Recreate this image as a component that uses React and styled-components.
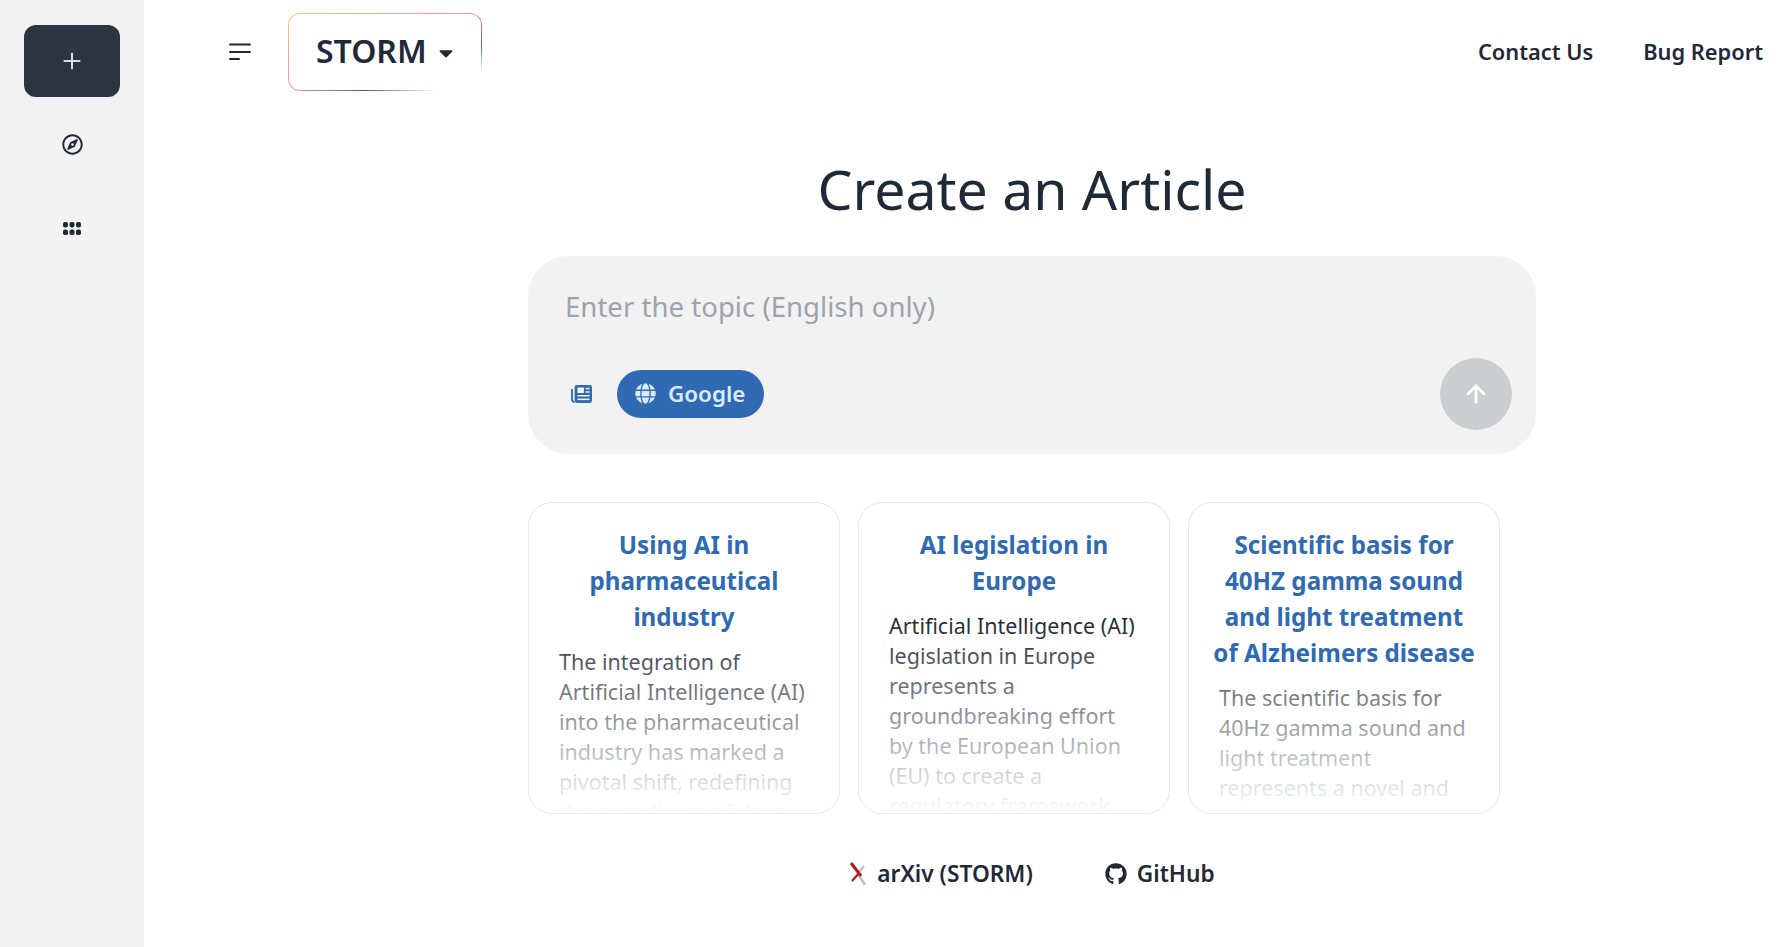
import React from "react"
import styled, { createGlobalStyle } from "styled-components"
import { FaCaretDown, FaGithub, FaGlobe, FaRegCompass } from "react-icons/fa"
import { ArrowUp, Plus } from "lucide-react"

const GlobalStyle = createGlobalStyle`
  html, body {
    margin: 0;
    padding: 0;
    background: #fff;
    font-family: "Noto Sans", "Open Sans", sans-serif;
    color: #1f2937;
  }
  * {
    box-sizing: border-box;
  }
`

const topics = [
  {
    title: "Using AI in pharmaceutical industry",
    titleLines: ["Using AI in", "pharmaceutical", "industry"],
    lines: [
      "The integration of",
      "Artificial Intelligence (AI)",
      "into the pharmaceutical",
      "industry has marked a",
      "pivotal shift, redefining",
      "the paradigms of drug",
    ],
  },
  {
    title: "AI legislation in Europe",
    titleLines: ["AI legislation in", "Europe"],
    lines: [
      "Artificial Intelligence (AI)",
      "legislation in Europe",
      "represents a",
      "groundbreaking effort",
      "by the European Union",
      "(EU) to create a",
      "regulatory framework",
    ],
  },
  {
    title: "Scientific basis for 40HZ",
    titleLines: ["Scientific basis for", "40HZ gamma sound", "and light treatment", "of Alzheimers disease"],
    lines: [
      "The scientific basis for",
      "40Hz gamma sound and",
      "light treatment",
      "represents a novel and",
    ],
  },
]

const GridDots = () => (
  <svg width="18" height="13" viewBox="0 0 18 13" fill="#1f2937">
    <rect x="0" y="0" width="5" height="5.4" rx="1.8" />
    <rect x="6.5" y="0" width="5" height="5.4" rx="1.8" />
    <rect x="13" y="0" width="5" height="5.4" rx="1.8" />
    <rect x="0" y="7.6" width="5" height="5.4" rx="1.8" />
    <rect x="6.5" y="7.6" width="5" height="5.4" rx="1.8" />
    <rect x="13" y="7.6" width="5" height="5.4" rx="1.8" />
  </svg>
)

const NewspaperGlyph = () => (
  <svg width="21" height="18" viewBox="0 0 21 18">
    <path d="M1 4v10.5A2.5 2.5 0 0 0 3.5 17" fill="none" stroke="#2f6ab3" strokeWidth="1.8" />
    <rect x="3.6" y="0" width="17.4" height="18" rx="2.4" fill="#2f6ab3" />
    <g fill="#f2f2f2">
      <rect x="6.5" y="2.6" width="6.4" height="5.4" rx="0.6" />
      <rect x="14.6" y="2.8" width="4" height="1.5" />
      <rect x="14.6" y="6.2" width="4" height="1.5" />
      <rect x="6.5" y="10" width="12.1" height="1.5" />
      <rect x="6.5" y="13.6" width="12.1" height="1.5" />
    </g>
  </svg>
)

const ArxivMark = () => (
  <svg width="18" height="24" viewBox="0 0 18 24">
    <path d="M15 4 10 10" stroke="#bdbdbd" strokeWidth="2.2" />
    <path d="M9 12 16 23" stroke="#c4c4c4" strokeWidth="3" />
    <path d="M10.5 10.5 3 19" stroke="#b31b1b" strokeWidth="2.2" />
    <path d="M2 1 12 14" stroke="#b31b1b" strokeWidth="3" />
  </svg>
)

export default function App() {
  return (
    <>
      <GlobalStyle />
      <Page>
        <Sidebar>
          <NewButton aria-label="New">
            <Plus size={26} strokeWidth={1.85} />
          </NewButton>
          <RailIcon>
            <FaRegCompass size={21} />
          </RailIcon>
          <RailIcon>
            <GridDots />
          </RailIcon>
        </Sidebar>

        <Main>
          <Header>
            <HeaderLeft>
              <MenuIcon width="24" height="20" viewBox="0 0 24 20">
                <path d="M2 2.5h20M2 10h20M2 17h9" stroke="#1f2937" strokeWidth="2" strokeLinecap="round" />
              </MenuIcon>
              <ModelPicker>
                STORM
                <FaCaretDown size={22} />
              </ModelPicker>
            </HeaderLeft>
            <HeaderLinks>
              <HeaderLink>Contact Us</HeaderLink>
              <HeaderLink>Bug Report</HeaderLink>
            </HeaderLinks>
          </Header>

          <Content>
            <Heading>Create an Article</Heading>

            <Composer>
              <Placeholder>Enter the topic (English only)</Placeholder>
              <ComposerBar>
                <ComposerTools>
                  <NewsIcon>
                    <NewspaperGlyph />
                  </NewsIcon>
                  <SourcePill>
                    <FaGlobe size={21} />
                    Google
                  </SourcePill>
                </ComposerTools>
                <SendButton aria-label="Send">
                  <ArrowUp size={28} strokeWidth={2.2} />
                </SendButton>
              </ComposerBar>
            </Composer>

            <Cards>
              {topics.map(topic => (
                <Card key={topic.title}>
                  <CardTitle>
                    {topic.titleLines.map(line => (
                      <Line key={line}>{line}</Line>
                    ))}
                  </CardTitle>
                  <CardBody>
                    {topic.lines.map(line => (
                      <Line key={line}>{line}</Line>
                    ))}
                  </CardBody>
                  <CardFade />
                </Card>
              ))}
            </Cards>

            <Footer>
              <FooterLink>
                <ArxivMark />
                arXiv (STORM)
              </FooterLink>
              <FooterLink>
                <FaGithub size={22} />
                GitHub
              </FooterLink>
            </Footer>
          </Content>
        </Main>
      </Page>
    </>
  )
}

const Page = styled.div`
  display: flex;
  width: 100%;
  height: 947px;
  overflow: hidden;
`

const Sidebar = styled.aside`
  width: 144px;
  flex-shrink: 0;
  background: #f2f2f2;
  display: flex;
  flex-direction: column;
  align-items: center;
  padding-top: 25px;
`

const NewButton = styled.button`
  width: 96px;
  height: 72px;
  border: 0;
  border-radius: 12px;
  background: #2d3441;
  color: #d9dce1;
  display: flex;
  align-items: center;
  justify-content: center;
  margin-bottom: 5px;
`

const RailIcon = styled.div`
  height: 84px;
  width: 100%;
  display: flex;
  align-items: center;
  justify-content: center;
  color: #1f2937;
`

const Main = styled.main`
  flex: 1;
  min-width: 0;
  display: flex;
  flex-direction: column;
`

const Header = styled.header`
  display: flex;
  justify-content: space-between;
  align-items: center;
  height: 78px;
  margin-top: 13px;
  padding: 0 20px 0 84px;
`

const HeaderLeft = styled.div`
  display: flex;
  align-items: center;
  gap: 36px;
`

const MenuIcon = styled.svg`
  display: block;
`

const ModelPicker = styled.div`
  width: 194px;
  height: 78px;
  border: 1.5px solid transparent;
  border-radius: 12px;
  background:
    linear-gradient(#fff, #fff) padding-box,
    linear-gradient(to bottom right, #fdc27c 0%, #ff8fa8 50%, #2f6ab3 70%, #ffffff 88%) border-box;
  display: flex;
  align-items: center;
  gap: 8px;
  padding: 0 0 3px 27px;
  font-size: 32px;
  font-weight: 600;
  color: #1f2937;

  svg {
    margin-top: 4px;
  }
`

const HeaderLinks = styled.nav`
  display: flex;
  gap: 50px;
  padding-bottom: 2px;
`

const HeaderLink = styled.a`
  font-size: 21.8px;
  font-weight: 600;
  color: #1f2937;
`

const Content = styled.div`
  margin-left: 384px;
  width: 1008px;
  display: flex;
  flex-direction: column;
`

const Heading = styled.h1`
  margin: 53px 0 0;
  height: 112px;
  line-height: 90px;
  font-size: 55.4px;
  font-weight: 400;
  text-align: center;
  color: #1f2937;
`

const Composer = styled.div`
  height: 198px;
  border-radius: 40px;
  background: #f2f2f2;
  padding: 32px 24px 24px 37px;
  display: flex;
  flex-direction: column;
  justify-content: space-between;
`

const Placeholder = styled.div`
  font-size: 27.6px;
  line-height: 37px;
  color: #9ca3af;
`

const ComposerBar = styled.div`
  display: flex;
  justify-content: space-between;
  align-items: center;
`

const ComposerTools = styled.div`
  display: flex;
  align-items: center;
  gap: 25px;
  padding-left: 6px;
`

const NewsIcon = styled.span`
  display: flex;
`

const SourcePill = styled.div`
  height: 48px;
  padding: 0 19px 2px 18px;
  border-radius: 24px;
  background: #2f6ab3;
  color: #dbeafe;
  display: flex;
  align-items: center;
  gap: 12px;
  font-size: 22.4px;
  font-weight: 600;
`

const SendButton = styled.button`
  width: 72px;
  height: 72px;
  border: 0;
  border-radius: 50%;
  background: #cbcdd1;
  color: #fff;
  display: flex;
  align-items: center;
  justify-content: center;
`

const Cards = styled.div`
  display: grid;
  grid-template-columns: repeat(3, 312px);
  gap: 18px;
  margin-top: 48px;
`

const Card = styled.article`
  position: relative;
  height: 312px;
  border: 1px solid #e5e7eb;
  border-radius: 24px;
  padding: 24px 30px 0;
  overflow: hidden;
  background: #fff;
`

const CardTitle = styled.h3`
  position: relative;
  z-index: 1;
  margin: 0 -8px 12px;
  font-size: 24.2px;
  line-height: 36px;
  font-weight: 700;
  text-align: center;
  color: #2f6ab3;
`

const CardBody = styled.div`
  font-size: 21.5px;
  line-height: 30px;
  color: #111827;
`

const Line = styled.div`
  white-space: nowrap;
`

const CardFade = styled.div`
  position: absolute;
  left: 0;
  right: 0;
  bottom: 0;
  height: 206px;
  background: linear-gradient(to bottom, rgba(255, 255, 255, 0), #fff 100%);
`

const Footer = styled.footer`
  display: flex;
  justify-content: center;
  gap: 72px;
  margin-top: 44px;
`

const FooterLink = styled.a`
  display: flex;
  align-items: center;
  gap: 10px;
  font-size: 22.7px;
  font-weight: 600;
  color: #1f2937;
`
